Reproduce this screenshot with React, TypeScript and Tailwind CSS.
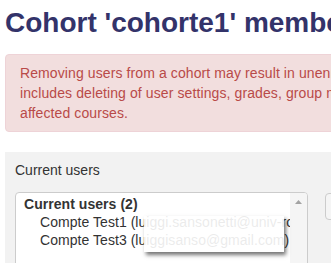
import React from "react";

export default function App() {
  return (
    <div
      className="w-[331px] h-[263px] overflow-hidden bg-white pl-[5px]"
      style={{ fontFamily: '"Liberation Sans", Arial, sans-serif' }}
    >
      <h2 className="mt-[3px] h-[40px] leading-[40px] text-[28px] font-bold text-[#33336a] whitespace-nowrap">
        Cohort 'cohorte1' members
      </h2>
      <div className="mt-[11px] w-[700px] border border-[#eed3d7] bg-[#f2dede] rounded-[4px] pt-[8px] pb-[8px] pl-[14px] text-[14px] leading-[20px] tracking-[0.1px] text-[#b94a48] whitespace-nowrap">
        <div>Removing users from a cohort may result in unenrolling of users from multiple courses which</div>
        <div>includes deleting of user settings, grades, group membership and other user information from</div>
        <div>affected courses.</div>
      </div>
      <div className="mt-[20px] w-[700px] h-[200px] bg-[#f2f2f2] pt-[8px] pl-[10px]">
        <div className="text-[14px] leading-[20px] text-[#333]">Current users</div>
        <div className="mt-[12px] flex items-start">
          <div className="relative w-[293px] h-[120px] border border-[#ccc] rounded-[4px] bg-white flex overflow-hidden">
            <div className="flex-1 overflow-hidden pt-[2px] text-[14px] leading-[18px] tracking-[0.05px] text-[#333] whitespace-nowrap">
              <div className="pl-[8px] font-bold">Current users (2)</div>
              <div className="pl-[24px]">Compte Test1 (luiggi.sansonetti@univ-roma3.it)</div>
              <div className="pl-[24px]">Compte Test3 (luiggisanso@gmail.com)</div>
            </div>
            <div className="w-[17px] h-full bg-[#f5f5f5] flex justify-center pt-[7px]">
              <svg width="7" height="4" viewBox="0 0 7 4">
                <polygon points="3.5,0 7,4 0,4" fill="#a3a3a3" />
              </svg>
            </div>
            <div className="absolute left-[128px] top-[23px] w-[140px] h-[36px] bg-white/90 shadow-[2px_3px_4px_rgba(0,0,0,0.55)]" />
          </div>
          <div className="ml-[17px] mt-[1px] w-[60px] h-[27px] border border-[#ccc] rounded-[4px] bg-[#f5f5f5]" />
        </div>
      </div>
    </div>
  );
}
